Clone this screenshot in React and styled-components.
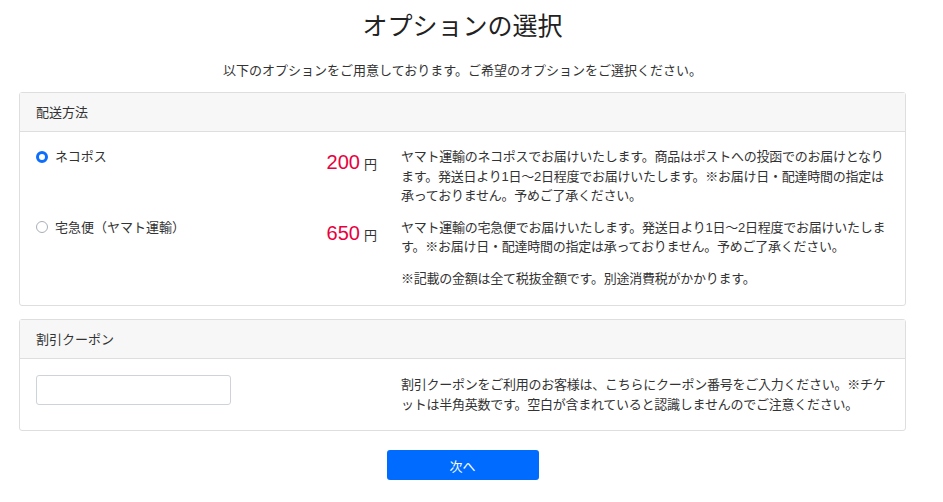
import React from "react";
import styled, { createGlobalStyle } from "styled-components";

const Global = createGlobalStyle`
  body {
    margin: 0;
    background: #fff;
    color: #333;
    font-family: "Liberation Sans", "Noto Sans CJK JP", sans-serif;
    font-size: 13px;
    line-height: 1.5;
  }
  * { box-sizing: border-box; }
`;

const Page = styled.div`
  width: 887px;
  margin-left: 19px;
  padding-top: 10px;
`;

const Title = styled.h1`
  margin: 0;
  font-size: 25px;
  font-weight: 400;
  line-height: 32px;
  text-align: center;
  color: #222;
`;

const Lead = styled.p`
  margin: 19px 0 11px;
  text-align: center;
  line-height: 20px;
`;

const Card = styled.section`
  border: 1px solid #dedede;
  border-radius: 3px;
  background: #fff;
  margin-bottom: 13px;
`;

const CardHeader = styled.div`
  background: #f7f7f7;
  border-bottom: 1px solid #dedede;
  padding: 10px 16px 9px;
  line-height: 19px;
`;

const CardBody = styled.div`
  padding: ${(p) => p.$pt}px 16px ${(p) => p.$pb}px;
  display: flex;
  flex-direction: column;
  gap: ${(p) => p.$gap || 0}px;
`;

const Row = styled.div`
  display: grid;
  grid-template-columns: 341px 1fr;
  column-gap: 24px;
  align-items: start;
`;

const Option = styled.div`
  display: flex;
  justify-content: space-between;
  align-items: flex-start;
`;

const RadioLabel = styled.label`
  display: flex;
  align-items: center;
  gap: 7px;
  line-height: 19.5px;
`;

const Radio = styled.span`
  width: 12px;
  height: 12px;
  border-radius: 50%;
  flex: none;
  background: #fff;
  border: ${(p) => (p.$checked ? "3.5px solid #0d6efd" : "1px solid #a9aeb8")};
`;

const Price = styled.div`
  color: #e8003d;
  font-size: 20px;
  line-height: 28px;
  margin-top: 1px;
  white-space: nowrap;
`;

const Yen = styled.span`
  font-size: 13px;
  color: #333;
  margin-left: 4px;
`;

const Desc = styled.p`
  margin: 0;
  line-height: 19.5px;
  letter-spacing: -0.25px;
`;

const Input = styled.input`
  width: 195px;
  height: 30px;
  border: 1px solid #ced2da;
  border-radius: 3px;
  padding: 4px 8px;
  font: inherit;
`;

const Footer = styled.div`
  display: flex;
  justify-content: center;
  padding-top: 6px;
`;

const Button = styled.button`
  width: 152px;
  height: 30px;
  border: none;
  border-radius: 3px;
  background: #006cff;
  color: #fff;
  font-family: inherit;
  font-size: 13px;
  cursor: pointer;
`;

const options = [
  {
    name: "ネコポス",
    price: "200",
    checked: true,
    desc:
      "ヤマト運輸のネコポスでお届けいたします。商品はポストへの投函でのお届けとなります。発送日より1日〜2日程度でお届けいたします。※お届け日・配達時間の指定は承っておりません。予めご了承ください。",
  },
  {
    name: "宅急便（ヤマト運輸）",
    price: "650",
    checked: false,
    desc:
      "ヤマト運輸の宅急便でお届けいたします。発送日より1日〜2日程度でお届けいたします。※お届け日・配達時間の指定は承っておりません。予めご了承ください。",
  },
];

export default function App() {
  return (
    <>
      <Global />
      <Page>
        <Title>オプションの選択</Title>
        <Lead>以下のオプションをご用意しております。ご希望のオプションをご選択ください。</Lead>
        <Card>
          <CardHeader>配送方法</CardHeader>
          <CardBody $pt={15} $pb={17} $gap={12}>
            {options.map((o) => (
              <Row key={o.name}>
                <Option>
                  <RadioLabel>
                    <Radio $checked={o.checked} />
                    {o.name}
                  </RadioLabel>
                  <Price>
                    {o.price}
                    <Yen>円</Yen>
                  </Price>
                </Option>
                <Desc>{o.desc}</Desc>
              </Row>
            ))}
            <Row>
              <div />
              <Desc>※記載の金額は全て税抜金額です。別途消費税がかかります。</Desc>
            </Row>
          </CardBody>
        </Card>
        <Card>
          <CardHeader>割引クーポン</CardHeader>
          <CardBody $pt={16} $pb={16}>
            <Row>
              <div>
                <Input type="text" />
              </div>
              <Desc>
                割引クーポンをご利用のお客様は、こちらにクーポン番号をご入力ください。※チケットは半角英数です。空白が含まれていると認識しませんのでご注意ください。
              </Desc>
            </Row>
          </CardBody>
        </Card>
        <Footer>
          <Button>次へ</Button>
        </Footer>
      </Page>
    </>
  );
}
